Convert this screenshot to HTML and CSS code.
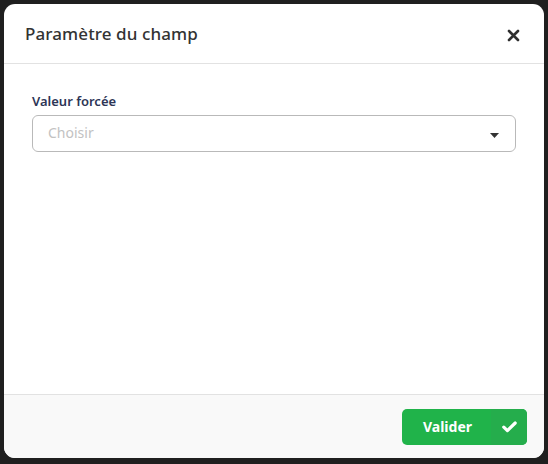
FILE: index.html
```html
<!DOCTYPE html>
<html lang="fr">
<head>
<meta charset="utf-8">
<link rel="stylesheet" href="styles.css">
</head>
<body>
<div class="modal">
  <div class="modal-header">
    <h1 class="title">Paramètre du champ</h1>
    <button class="close" aria-label="Fermer">
      <svg width="13" height="13" viewBox="0 0 13 13"><path d="M2 2 L11 11 M11 2 L2 11" stroke="#2f2f2f" stroke-width="2.6" stroke-linecap="round"/></svg>
    </button>
  </div>
  <div class="modal-body">
    <label class="field-label">Valeur forcée</label>
    <div class="select">
      <span class="placeholder">Choisir</span>
      <svg class="caret" width="9" height="5" viewBox="0 0 9 5"><path d="M0 0 H9 L4.5 5 Z" fill="#333"/></svg>
    </div>
  </div>
  <div class="modal-footer">
    <button class="btn-valider">
      <span class="btn-text">Valider</span>
      <span class="btn-icon">
        <svg width="15" height="12" viewBox="0 0 15 12"><path d="M1.8 6.2 L5.4 9.6 L13.2 2" stroke="#fff" stroke-width="3.2" fill="none" stroke-linecap="round" stroke-linejoin="round"/></svg>
      </span>
    </button>
  </div>
</div>
</body>
</html>
```
FILE: styles.css
```css
html, body {
  margin: 0;
  padding: 0;
}
body {
  background: #1f1f1f;
  width: 548px;
  height: 464px;
  padding: 4px;
  box-sizing: border-box;
  font-family: "Noto Sans", "Open Sans", sans-serif;
}
.modal {
  width: 540px;
  height: 454px;
  background: #ffffff;
  border-radius: 11px;
  overflow: hidden;
  display: flex;
  flex-direction: column;
}
.modal-header {
  height: 60px;
  border-bottom: 1px solid #e2e2e2;
  display: flex;
  align-items: center;
  justify-content: space-between;
  padding: 0 24px 0 21px;
  box-sizing: border-box;
  flex-shrink: 0;
}
.title {
  margin: 0;
  font-size: 17px;
  font-weight: 500;
  color: #333333;
  letter-spacing: 0.1px;
}
.close {
  border: none;
  background: none;
  padding: 0;
  display: flex;
  margin-top: 4px;
}
.modal-body {
  flex: 1;
  padding: 28px 28px 0 28px;
  display: flex;
  flex-direction: column;
}
.field-label {
  font-size: 13px;
  font-weight: 600;
  color: #2d3556;
  margin-bottom: 5px;
  line-height: 18px;
}
.select {
  height: 37px;
  border: 1px solid #b9b9b9;
  border-radius: 6px;
  box-sizing: border-box;
  display: flex;
  align-items: center;
  justify-content: space-between;
  padding: 0 16px 0 15px;
}
.placeholder {
  font-size: 14px;
  color: #c2c2c2;
  margin-top: -3px;
}
.caret {
  margin-top: 4px;
}
.modal-footer {
  height: 64px;
  background: #f9f9f9;
  border-top: 1px solid #e2e2e2;
  display: flex;
  align-items: center;
  justify-content: flex-end;
  padding: 0 17px 0 0;
  box-sizing: border-box;
  flex-shrink: 0;
}
.btn-valider {
  height: 36px;
  width: 125px;
  border: none;
  border-radius: 5px;
  overflow: hidden;
  padding: 0;
  display: flex;
  background: #20b34a;
  font-family: "Noto Sans", "Open Sans", sans-serif;
  margin-top: 1px;
}
.btn-text {
  flex: 1;
  display: flex;
  align-items: center;
  justify-content: center;
  color: #ffffff;
  font-size: 14px;
  font-weight: 700;
  padding-left: 2px;
  padding-bottom: 2px;
}
.btn-icon {
  width: 36px;
  display: flex;
  align-items: center;
  justify-content: center;
  background: #25ad4c;
}
```
